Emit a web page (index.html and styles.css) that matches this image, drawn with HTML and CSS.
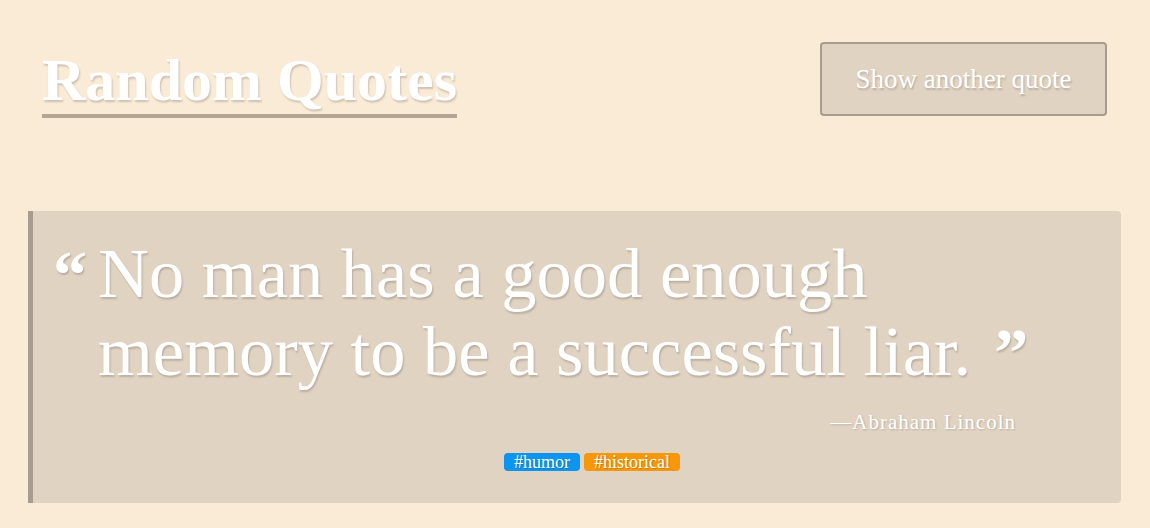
FILE: index.html
```html
<!DOCTYPE html>
<html lang="en">
<head>
<meta charset="utf-8">
<title>Random Quotes</title>
<link rel="stylesheet" href="styles.css">
</head>
<body>
  <header class="top">
    <h1 class="title">Random Quotes</h1>
    <button class="next-btn" type="button">Show another quote</button>
  </header>
  <main class="card">
    <blockquote class="quote">
      <span class="mark mark-open">&ldquo;</span>No man has a good enough memory to be a successful liar.<span class="mark mark-close">&rdquo;</span>
    </blockquote>
    <p class="author">&mdash;Abraham Lincoln</p>
    <div class="tags">
      <span class="tag tag-blue">#humor</span>
      <span class="tag tag-orange">#historical</span>
    </div>
  </main>
</body>
</html>
```

FILE: styles.css
```css
html, body {
  margin: 0;
  padding: 0;
}
body {
  background: #faebd7;
  font-family: "Liberation Serif", "Times New Roman", serif;
  color: #fff;
  padding: 0 29px 0 28px;
  height: 528px;
  box-sizing: border-box;
}
.top {
  display: flex;
  justify-content: space-between;
  align-items: flex-start;
  padding: 41px 14px 0 14px;
  height: 170px;
  box-sizing: border-box;
}
.title {
  margin: 0;
  font-size: 60px;
  font-weight: bold;
  line-height: 68px;
  padding-top: 5px;
  border-bottom: 4px solid #b5a595;
  text-shadow: 1px 2px 2px rgba(0, 0, 0, 0.18);
}
.next-btn {
  margin-top: 1px;
  width: 287px;
  height: 74px;
  background: #e0d3c2;
  border: 2px solid #a89c8e;
  border-radius: 4px;
  color: #fff;
  font-family: "Liberation Serif", "Times New Roman", serif;
  font-size: 27px;
  text-shadow: 1px 2px 2px rgba(0, 0, 0, 0.18);
  cursor: pointer;
}
.card {
  margin-top: 41px;
  background: #e0d3c2;
  border-left: 5px solid #a89c8e;
  border-radius: 0 4px 4px 0;
  padding: 23px 105px 32px 22px;
  display: flex;
  flex-direction: column;
}
.quote {
  margin: 0;
  padding-left: 43px;
  margin-right: -70px;
  position: relative;
  font-size: 70.5px;
  line-height: 78px;
  text-shadow: 1px 2px 2px rgba(0, 0, 0, 0.18);
}
.mark {
  font-weight: bold;
  font-size: 68px;
  line-height: 0;
  vertical-align: baseline;
}
.mark-open {
  position: absolute;
  left: -2px;
  top: 41px;
}
.mark-close {
  margin-left: 23px;
}
.author {
  margin: 20px 0 0;
  align-self: flex-end;
  font-size: 21px;
  letter-spacing: 1px;
  text-shadow: 1px 1px 2px rgba(0, 0, 0, 0.18);
}
.tags {
  margin-top: 18px;
  padding-left: 113px;
  display: flex;
  justify-content: center;
  gap: 4px;
}
.tag {
  font-size: 18px;
  line-height: 18px;
  padding: 0 10px;
  border-radius: 4px;
  text-shadow: 1px 1px 1px rgba(0, 0, 0, 0.2);
}
.tag-blue {
  background: #0a96f0;
}
.tag-orange {
  background: #f7980a;
}
```
